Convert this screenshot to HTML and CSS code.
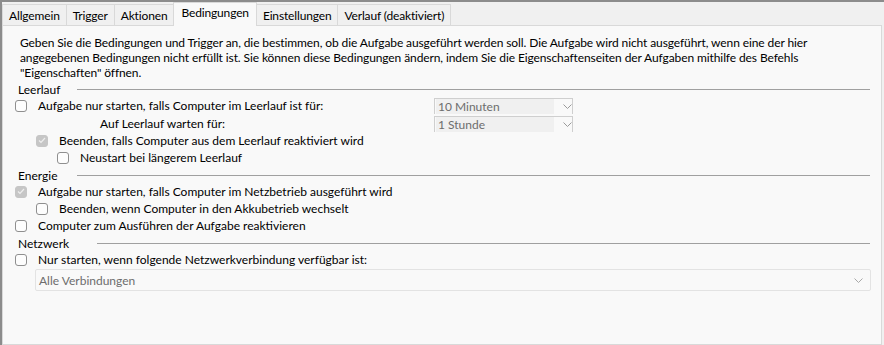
FILE: index.html
```html
<!DOCTYPE html>
<html>
    <head>
        <title>Bedingungen</title>
        <link rel="stylesheet" href="styles.css">
    </head>
    <body>
        <div class="window">
            <div class="tabs">
                <div class="tab">Allgemein</div>
                <div class="tab">Trigger</div>
                <div class="tab">Aktionen</div>
                <div class="tab active">Bedingungen</div>
                <div class="tab">Einstellungen</div>
                <div class="tab">Verlauf (deaktiviert)</div>
            </div>

            <div class="panel">
                <p class="intro">
                    Geben Sie die Bedingungen und Trigger an, die bestimmen, ob die Aufgabe ausgeführt werden soll. Die Aufgabe wird nicht ausgeführt, wenn eine der hier<br>
                    angegebenen Bedingungen nicht erfüllt ist. Sie können diese Bedingungen ändern, indem Sie die Eigenschaftenseiten der Aufgaben mithilfe des Befehls<br>
                    "Eigenschaften" öffnen.
                </p>

                <div class="section">
                    <span class="section-title">Leerlauf</span>
                    <span class="rule"></span>
                </div>
                <div class="idle-grid">
                    <label class="row">
                        <span class="cb"></span>
                        Aufgabe nur starten, falls Computer im Leerlauf ist für:
                    </label>
                    <div class="combo small">
                        <span class="combo-text">10 Minuten</span>
                        <svg class="chev" width="9" height="5" viewBox="0 0 9 5"><polyline points="0.5,0.5 4.5,4.5 8.5,0.5" fill="none" stroke="#9a9a9a" stroke-width="1"/></svg>
                    </div>
                    <div class="row wait-label">Auf Leerlauf warten für:</div>
                    <div class="combo small">
                        <span class="combo-text">1 Stunde</span>
                        <svg class="chev" width="9" height="5" viewBox="0 0 9 5"><polyline points="0.5,0.5 4.5,4.5 8.5,0.5" fill="none" stroke="#9a9a9a" stroke-width="1"/></svg>
                    </div>
                </div>
                <label class="row indent-1">
                    <span class="cb checked"><svg width="8" height="7" viewBox="0 0 8 7"><polyline points="1,3.5 3,5.5 7,1" fill="none" stroke="#eeeeee" stroke-width="1.2"/></svg></span>
                    Beenden, falls Computer aus dem Leerlauf reaktiviert wird
                </label>
                <label class="row indent-2">
                    <span class="cb"></span>
                    Neustart bei längerem Leerlauf
                </label>

                <div class="section">
                    <span class="section-title">Energie</span>
                    <span class="rule"></span>
                </div>
                <label class="row">
                    <span class="cb checked"><svg width="8" height="7" viewBox="0 0 8 7"><polyline points="1,3.5 3,5.5 7,1" fill="none" stroke="#eeeeee" stroke-width="1.2"/></svg></span>
                    Aufgabe nur starten, falls Computer im Netzbetrieb ausgeführt wird
                </label>
                <label class="row indent-1">
                    <span class="cb"></span>
                    Beenden, wenn Computer in den Akkubetrieb wechselt
                </label>
                <label class="row">
                    <span class="cb"></span>
                    Computer zum Ausführen der Aufgabe reaktivieren
                </label>

                <div class="section">
                    <span class="section-title wide">Netzwerk</span>
                    <span class="rule"></span>
                </div>
                <label class="row">
                    <span class="cb"></span>
                    Nur starten, wenn folgende Netzwerkverbindung verfügbar ist:
                </label>
                <div class="combo large">
                    <span class="combo-text">Alle Verbindungen</span>
                    <svg class="chev" width="9" height="5" viewBox="0 0 9 5"><polyline points="0.5,0.5 4.5,4.5 8.5,0.5" fill="none" stroke="#a8a8a8" stroke-width="1"/></svg>
                </div>
            </div>
        </div>
    </body>
</html>
```

FILE: styles.css
```css
* {
    box-sizing: border-box;
}
body {
    margin: 0;
    font-family: Lato, "Noto Sans", sans-serif;
    font-size: 12px;
    color: #000;
    background: #f0f0f0;
    overflow: hidden;
}
.window {
    height: 345px;
    border-top: 2px solid #8c8c8c;
    border-left: 2px solid #8c8c8c;
    padding-right: 2px;
    display: flex;
    flex-direction: column;
}
.tabs {
    display: flex;
    align-items: flex-end;
    height: 23px;
}
.tab {
    height: 21px;
    padding: 0 6px;
    line-height: 21px;
    letter-spacing: -0.15px;
    border: 1px solid #d9d9d9;
    border-bottom: none;
    margin-right: -1px;
    white-space: nowrap;
}
.tab.active {
    height: 24px;
    line-height: 20px;
    margin-bottom: -1px;
    background: #f9f9f9;
    position: relative;
    z-index: 1;
    padding: 0 7px;
}
.panel {
    flex: 1;
    background: #f9f9f9;
    border: 1px solid #d9d9d9;
    padding: 9px 0 0 12px;
}
.intro {
    margin: 0 0 0 5px;
    line-height: 15px;
    letter-spacing: -0.1px;
    white-space: nowrap;
}
.section {
    display: flex;
    align-items: center;
    height: 16px;
    margin: 1px 11px 0 3px;
}
.section-title {
    width: 59px;
}
.section-title.wide {
    width: 79px;
}
.rule {
    flex: 1;
    border-top: 1px solid #a0a0a0;
}
.row {
    display: flex;
    align-items: center;
    gap: 11px;
    height: 17px;
    white-space: nowrap;
}
.indent-1 {
    margin-left: 21px;
}
.indent-2 {
    margin-left: 42px;
}
.cb {
    flex: 0 0 12px;
    height: 12px;
    border: 1px solid #8f8f8f;
    border-radius: 3px;
    background: #fdfdfd;
    display: flex;
    align-items: center;
    justify-content: center;
}
.cb.checked {
    border-color: #c6c6c6;
    background: #c6c6c6;
}
.idle-grid {
    display: grid;
    grid-template-columns: 419px 139px;
    row-gap: 1px;
}
.wait-label {
    padding-left: 85px;
}
.combo {
    display: flex;
    align-items: center;
    color: #6d6d6d;
    border: 1px solid #cfcfcf;
}
.combo.small {
    height: 16px;
    border-bottom: none;
    overflow: hidden;
    padding-left: 1px;
    margin-top: 1px;
}
.combo.small .combo-text {
    width: 118px;
    height: 15px;
    line-height: 16px;
    background: #f0f0f0;
    padding-left: 2px;
    align-self: flex-end;
}
.combo.small .chev {
    margin-left: 9px;
}
.combo.large {
    width: 836px;
    height: 22px;
    margin: 1px 0 0 20px;
    padding: 0 7px 0 3px;
    justify-content: space-between;
    border-color: #e3e3e3;
    border-radius: 2px;
}
```
